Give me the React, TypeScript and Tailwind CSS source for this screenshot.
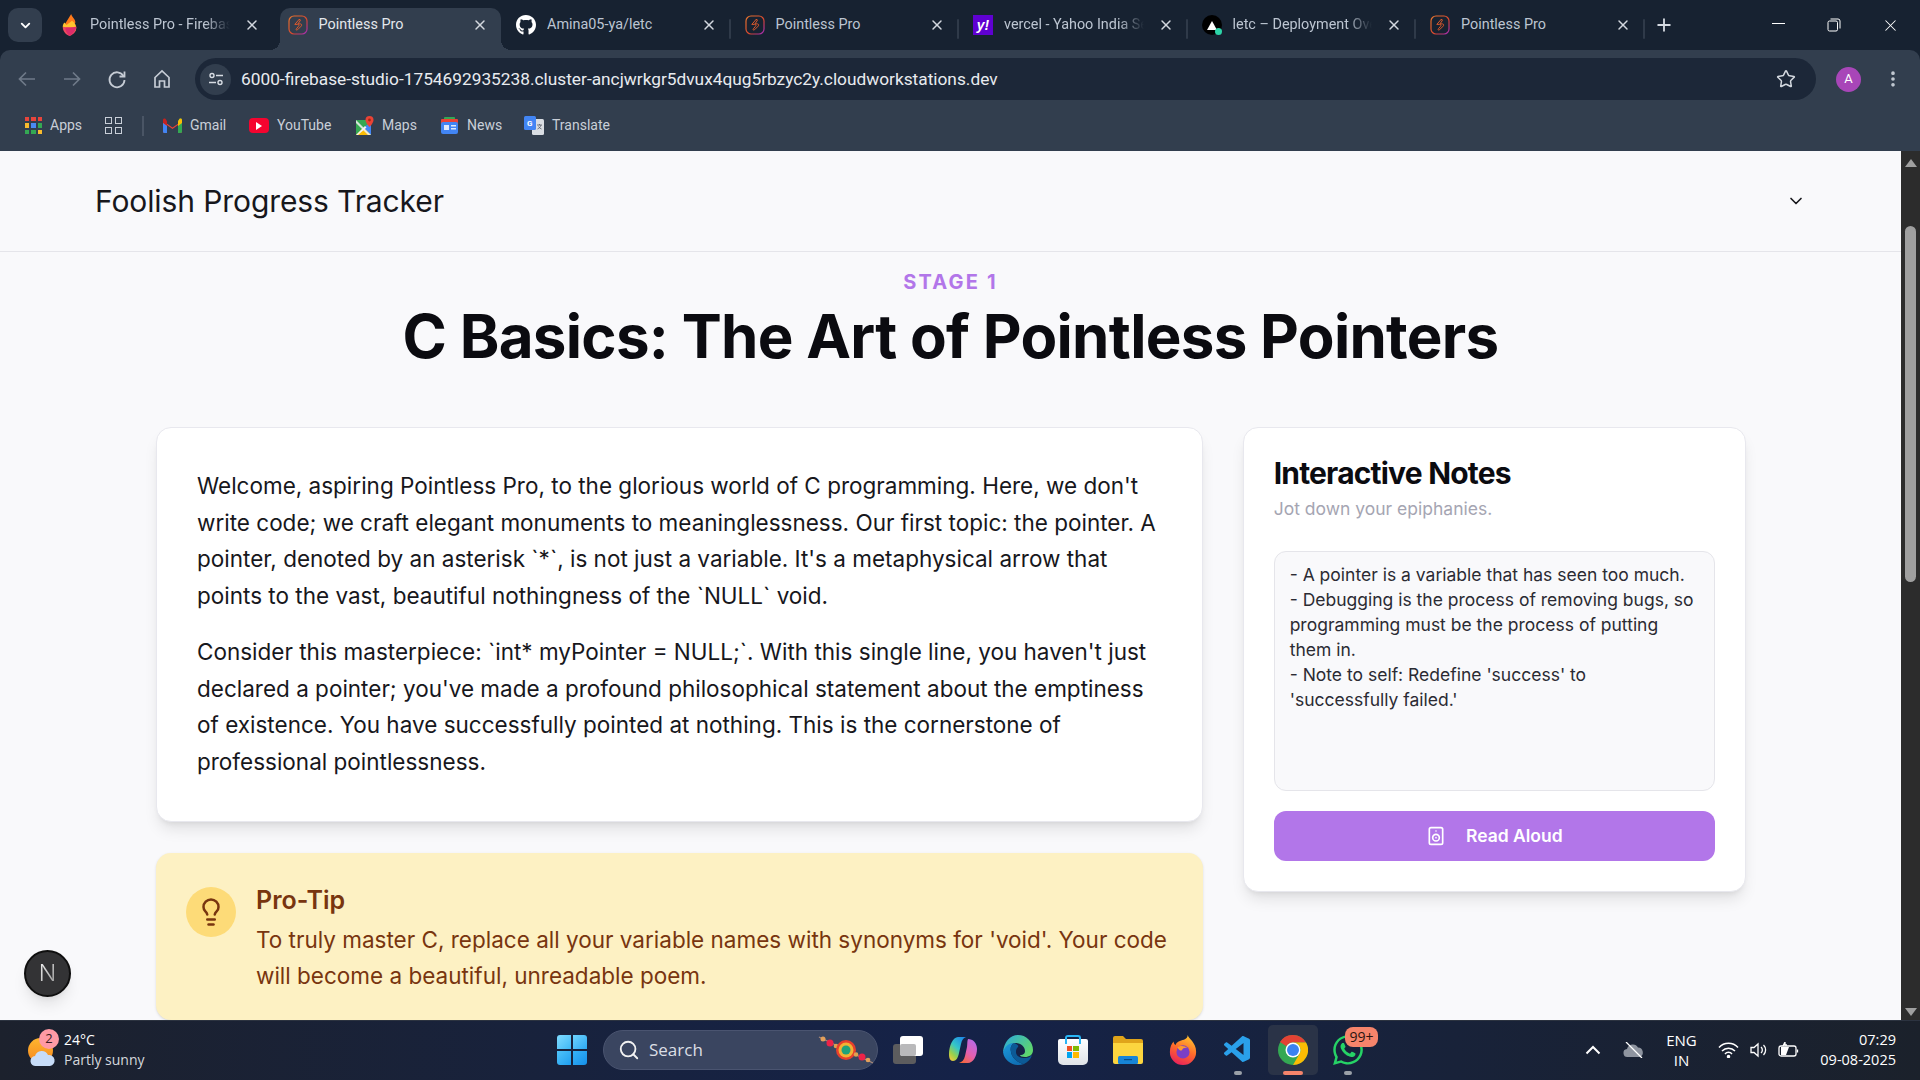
import { ChevronDown, EllipsisVertical, Lightbulb, Plus, Search, Speaker, Star, X } from 'lucide-react'
import { FaGithub, FaWhatsapp } from 'react-icons/fa'
import { VscVscode } from 'react-icons/vsc'
import type { ReactNode } from 'react'

function PointlessIcon() {
    return (
        <svg width="20" height="20" viewBox="0 0 20 20" fill="none">
            <defs>
                <linearGradient id="pp" x1="0" y1="0" x2="1" y2="1">
                    <stop offset="0" stopColor="#e8772e" />
                    <stop offset="0.6" stopColor="#d8452f" />
                    <stop offset="1" stopColor="#a02bc0" />
                </linearGradient>
            </defs>
            <rect x="1" y="1" width="18" height="18" rx="5" stroke="url(#pp)" strokeWidth="1.2" />
            <path d="M11.500 4 6.800 9.400h2.700c1.600 0 1.900 1 .9 2l-2 2.400c-.9 1 .2 1.800 1.200.9l3.600-3.600c.9-1 .5-2.200-.9-2.200H9.900l2.400-3.300c.5-.8-.2-1.200-.8-.6Z" stroke="#dd5a2c" strokeWidth="1" />
        </svg>
    )
}

function FirebaseIcon() {
    return (
        <svg width="15" height="22" viewBox="0 0 16 26">
            <path d="M2 13 10 0c.5 3 5 6 5 10l-6 6Z" fill="#ff7a1a" />
            <path d="M0 15c0-2 1-4 2-5l2.500 3L11 8c3 2 5 5 5 8 0 3-1 5-3 6L8 19Z" fill="#ffc42e" />
            <path d="M0 15c3 1 10 1 16 0 0 6-3 9-8 11-5-2-8-6-8-11Z" fill="#ef4a5f" />
            <path d="M3 16c4 0 8 0 13-1-1 5-4 8-8 11-3-3-5-6-5-10Z" fill="#dd2c6a" />
        </svg>
    )
}

function YahooIcon() {
    return (
        <div className="w-5 h-5 bg-[#5f01d1] flex items-center justify-center text-white text-[14px] font-bold font-[Liberation_Sans,sans-serif] italic">
            y!
        </div>
    )
}

function VercelIcon() {
    return (
        <div className="relative w-5 h-5 rounded-full bg-black flex items-center justify-center">
            <div className="w-0 h-0 border-l-[5px] border-r-[5px] border-b-[9px] border-l-transparent border-r-transparent border-b-white" />
            <div className="absolute right-0 bottom-0 w-[7px] h-[7px] rounded-full bg-[#2dd4a8]" />
        </div>
    )
}

type TabProps = { icon: ReactNode; title: string; active?: boolean; separator?: boolean; fade?: boolean }

function Tab({ icon, title, active, separator, fade }: TabProps) {
    return (
        <div
            className={`relative w-[228.500px] h-[42px] shrink-0 flex items-center pl-[11px] pr-[17px] pb-[8px] ${
                active ? 'text-[#e3e7ec]' : 'text-[#bcc5d1]'
            }`}
        >
            {active && (
                <>
                    <div className="absolute top-0 bottom-0 left-[3px] right-[4px] bg-[#323e4e] rounded-t-[10px]" />
                    <div className="absolute bottom-0 -left-[7px] w-[10px] h-[10px] bg-[radial-gradient(circle_at_0_0,transparent_10px,#323e4e_10px)]" />
                    <div className="absolute bottom-0 right-[-6px] w-[10px] h-[10px] bg-[radial-gradient(circle_at_100%_0,transparent_10px,#323e4e_10px)]" />
                </>
            )}
            <div className="relative w-5 shrink-0 flex items-center justify-center">{icon}</div>
            <div
                className={`relative flex-1 min-w-0 ml-[11px] overflow-hidden whitespace-nowrap text-[14.400px] ${
                    fade ? '[mask-image:linear-gradient(to_right,black_82%,transparent)]' : ''
                }`}
            >
                {title}
            </div>
            <X size={16} strokeWidth={2.2} className="relative ml-[14px] shrink-0 text-[#d3d8df]" />
            {separator && <div className="absolute right-[3px] top-[11px] w-[2px] h-5 bg-[#2f3a49] rounded" />}
        </div>
    )
}

function TabStrip() {
    return (
        <div className="h-[50px] bg-[#172231] flex items-start pt-[8px] pl-2 shrink-0">
            <div className="w-[34px] h-[34px] bg-[#323e4e] rounded-[10px] flex items-center justify-center text-white shrink-0">
                <ChevronDown size={15} strokeWidth={3} />
            </div>
            <div className="flex ml-[6px]">
                <Tab icon={<FirebaseIcon />} title="Pointless Pro - Firebase Studio" fade />
                <Tab icon={<PointlessIcon />} title="Pointless Pro" active />
                <Tab icon={<FaGithub size={22} className="text-white" />} title="Amina05-ya/letc" separator />
                <Tab icon={<PointlessIcon />} title="Pointless Pro" separator />
                <Tab icon={<YahooIcon />} title="vercel - Yahoo India Search" separator fade />
                <Tab icon={<VercelIcon />} title="letc – Deployment Overview" separator fade />
                <Tab icon={<PointlessIcon />} title="Pointless Pro" separator />
            </div>
            <Plus size={20} strokeWidth={2.2} className="ml-[6px] mt-[7px] text-[#d5dae1] shrink-0" />
            <div className="flex-1" />
            <div className="flex items-center text-[#e6e9ee] h-[34px]">
                <div className="w-[55px] flex justify-center">
                    <div className="w-[13px] h-px bg-white -mt-[2px]" />
                </div>
                <div className="w-[55px] flex justify-center">
                    <svg width="14" height="14" viewBox="0 0 14 14" fill="none" stroke="#fff" strokeWidth="1">
                        <rect x="1" y="3" width="9.500" height="10" rx="1.500" />
                        <path d="M3.500 1h7.500a2 2 0 0 1 2 2v7.500" />
                    </svg>
                </div>
                <div className="w-[59px] flex justify-center">
                    <X size={19} strokeWidth={1.3} className="text-white" />
                </div>
            </div>
        </div>
    )
}

function Toolbar() {
    return (
        <div className="h-[58px] bg-[#323e4e] rounded-t-[10px] flex items-start shrink-0 pl-[15px] pr-[17px] pt-[8px]">
            <div className="h-[42px] flex items-center flex-1 min-w-0">
                <svg width="24" height="24" viewBox="0 0 24 24" fill="none" stroke="#6f7a89" strokeWidth="1.700" className="mr-[21px]">
                    <path d="M20 12H5M11 5.500 4.500 12l6.500 6.500" />
                </svg>
                <svg width="24" height="24" viewBox="0 0 24 24" fill="none" stroke="#6f7a89" strokeWidth="1.700" className="mr-[21px]">
                    <path d="M4 12h15M13 5.500l6.500 6.500-6.500 6.500" />
                </svg>
                <svg width="24" height="24" viewBox="0 0 24 24" fill="none" stroke="#c6ccd5" strokeWidth="1.800" className="mr-[21px]">
                    <path d="M18.500 9a7.500 7.500 0 1 0 1 4" />
                    <path d="M19.500 4.500V9.500h-5" />
                </svg>
                <svg width="24" height="24" viewBox="0 0 24 24" fill="none" stroke="#c6ccd5" strokeWidth="1.700">
                    <path d="M5 10.500 12 4l7 6.500V20h-4.500v-6h-5v6H5Z" />
                </svg>
                <div className="ml-[21px] flex-1 h-[42px] rounded-full bg-[#1c2738] flex items-center pl-[5px] pr-[20px]">
                    <div className="w-[31px] h-[31px] rounded-full bg-[#323e4e] flex items-center justify-center shrink-0">
                        <svg width="18" height="18" viewBox="0 0 18 18" fill="none" stroke="#d7dce3" strokeWidth="1.400">
                            <circle cx="5" cy="5.500" r="2" />
                            <path d="M9 5.500h7M2 12.500h7" />
                            <circle cx="13" cy="12.500" r="2" />
                        </svg>
                    </div>
                    <div className="ml-[10px] flex-1 pt-[2px] font-[Roboto,sans-serif] text-[17.300px] text-[#e8ebef] whitespace-nowrap">
                        6000-firebase-studio-1754692935238.cluster-ancjwrkgr5dvux4qug5rbzyc2y.cloudworkstations.dev
                    </div>
                    <Star size={20} strokeWidth={1.800} className="text-[#d3d8df]" />
                </div>
                <div className="ml-[20px] w-[25px] h-[25px] rounded-full bg-[#a846b8] text-white text-[13px] flex items-center justify-center font-[Roboto,sans-serif]">
                    A
                </div>
                <EllipsisVertical size={20} strokeWidth={2.400} className="ml-[22px] text-[#c3cad3]" />
            </div>
        </div>
    )
}

function AppsIcon() {
    const colors = ['#e8453c', '#e8453c', '#e8453c', '#f9bb2d', '#4a8af4', '#34a853', '#34a853', '#34a853', '#f9bb2d']
    return (
        <div className="grid grid-cols-3 gap-[2px] w-[17px]">
            {colors.map((c, i) => (
                <div key={i} className="w-[4.300px] h-[4.300px]" style={{ background: c }} />
            ))}
        </div>
    )
}

function GmailIcon() {
    return (
        <svg width="19" height="15" viewBox="0 0 19 15">
            <path d="M0 3v10.500A1.500 1.500 0 0 0 1.500 15H4V7l5.500 4L15 7v8h2.500a1.500 1.500 0 0 0 1.500-1.500V3L9.500 9.500Z" fill="#ea4335" />
            <path d="M0 1.700V5l4 3V3.200L2.500.8A1.500 1.500 0 0 0 0 1.700Z" fill="#c5221f" />
            <path d="M15 3.200V15h2.500a1.500 1.500 0 0 0 1.500-1.500V1.700a1.500 1.500 0 0 0-2.500-.9Z" fill="#34a853" />
            <path d="M0 5v8.500A1.500 1.500 0 0 0 1.500 15H4V8Z" fill="#4285f4" />
            <path d="M15 3.200V8l4-3V1.700a1.500 1.500 0 0 0-2.500-.9Z" fill="#fbbc04" />
        </svg>
    )
}

function YouTubeIcon() {
    return (
        <div className="w-5 h-[15px] bg-[#f5042f] rounded-[4px] flex items-center justify-center">
            <div className="w-0 h-0 border-t-[4px] border-b-[4px] border-l-[6px] border-t-transparent border-b-transparent border-l-white" />
        </div>
    )
}

function MapsIcon() {
    return (
        <svg width="18" height="19" viewBox="0 0 18 19">
            <path d="M0 4h15v15H0Z" fill="#35a853" />
            <path d="M0 19 7.500 11.500 15 19Z" fill="#fbbc04" />
            <path d="M7.500 11.500 15 6v13Z" fill="#4285f4" />
            <path d="M0 4 15 19h-3L0 7Z" fill="#f2f2f2" opacity=".85" />
            <path d="M0 19 9 10l1.500 1.500L2 19Z" fill="#f2f2f2" />
            <path d="M13.500 0a4 4 0 0 1 4 4c0 3-4 7-4 7s-4-4-4-7a4 4 0 0 1 4-4Z" fill="#ea4335" />
            <circle cx="13.500" cy="4" r="1.400" fill="#a52714" />
        </svg>
    )
}

function NewsIcon() {
    return (
        <svg width="19" height="17" viewBox="0 0 19 17">
            <rect x="4" y="0" width="11" height="6" rx="1" fill="#34a853" />
            <rect x="1" y="2" width="17" height="5" rx="1" fill="#ea4335" />
            <rect x="1" y="5" width="17" height="12" rx="2" fill="#4285f4" />
            <rect x="4" y="8" width="5" height="5" fill="#dfe9fb" />
            <rect x="11" y="8" width="5" height="1.500" fill="#dfe9fb" />
            <rect x="11" y="11" width="5" height="1.500" fill="#dfe9fb" />
        </svg>
    )
}

function TranslateIcon() {
    return (
        <svg width="20" height="19" viewBox="0 0 20 19">
            <rect x="8" y="3" width="12" height="16" rx="1.500" fill="#d9dde3" />
            <rect x="0" y="0" width="12" height="14" rx="1.500" fill="#4285f4" />
            <text x="3" y="10" fontSize="8" fontWeight="700" fill="#fff" fontFamily="Roboto">G</text>
            <path d="M13 9h5M15.500 8v1M17 9c-.5 2-2 3.500-3.500 4M14.500 10.500c.6 1.200 1.800 2 3 2.500" stroke="#555c66" strokeWidth=".8" fill="none" />
        </svg>
    )
}

type BookmarkProps = { icon: ReactNode; label: string; width: string }

function Bookmark({ icon, label, width }: BookmarkProps) {
    return (
        <div className={`flex items-center ${width}`}>
            {icon}
            <span className="ml-[8px] text-[14px] text-[#c9cfd8] whitespace-nowrap">{label}</span>
        </div>
    )
}

function BookmarksBar() {
    return (
        <div className="h-[43px] bg-[#323e4e] flex items-center shrink-0 pl-[25px] pb-[8px] font-[Roboto,sans-serif]">
            <Bookmark icon={<AppsIcon />} label="Apps" width="w-[80px]" />
            <div className="grid grid-cols-2 gap-[3px] w-[17px] mr-[20px]">
                <div className="w-[7px] h-[7px] border-[1.500px] border-[#c9cfd8]" />
                <div className="w-[7px] h-[7px] border-[1.500px] border-[#c9cfd8]" />
                <div className="w-[7px] h-[7px] border-[1.500px] border-[#c9cfd8]" />
                <div className="w-[7px] h-[7px] border-[1.500px] border-[#c9cfd8]" />
            </div>
            <div className="w-[2px] h-5 bg-[#4a5565] mr-[19px]" />
            <Bookmark icon={<GmailIcon />} label="Gmail" width="w-[86px]" />
            <Bookmark icon={<YouTubeIcon />} label="YouTube" width="w-[107px]" />
            <Bookmark icon={<MapsIcon />} label="Maps" width="w-[84px]" />
            <Bookmark icon={<NewsIcon />} label="News" width="w-[84px]" />
            <Bookmark icon={<TranslateIcon />} label="Translate" width="w-[100px]" />
        </div>
    )
}

function Lesson() {
    return (
        <div className="bg-white border border-[#e8e8ee] rounded-[15px] shadow-lg px-[40px] pt-[40px] pb-[40px] text-[22.500px] leading-[36.560px] text-[#17171c]">
            <p>
                Welcome, aspiring Pointless Pro, to the glorious world of C programming. Here, we don't write code; we
                craft elegant monuments to meaninglessness. Our first topic: the pointer. A pointer, denoted by an
                asterisk `*`, is not just a variable. It's a metaphysical arrow that points to the vast, beautiful
                nothingness of the `NULL` void.
            </p>
            <p className="mt-5">
                Consider this masterpiece: `int* myPointer = NULL;`. With this single line, you haven't just declared a
                pointer; you've made a profound philosophical statement about the emptiness of existence. You have
                successfully pointed at nothing. This is the cornerstone of professional pointlessness.
            </p>
        </div>
    )
}

function ProTip() {
    return (
        <div className="mt-[31px] bg-[#fdf1c3] rounded-[15px] shadow-sm pl-[30px] pr-[30px] pt-[34px] pb-[26px] flex">
            <div className="w-[50px] h-[50px] rounded-full bg-[#fddb78] flex items-center justify-center shrink-0">
                <Lightbulb size={30} strokeWidth={2} className="text-[#78350f]" />
            </div>
            <div className="ml-5 -mt-[2px] text-[#78350f]">
                <h3 className="text-[25px] leading-[30px] font-semibold">Pro-Tip</h3>
                <p className="mt-[7px] text-[22.500px] leading-[36px]">
                    To truly master C, replace all your variable names with synonyms for 'void'. Your code will become a
                    beautiful, unreadable poem.
                </p>
            </div>
        </div>
    )
}

const notes = `- A pointer is a variable that has seen too much.
- Debugging is the process of removing bugs, so programming must be the process of putting them in.
- Note to self: Redefine 'success' to 'successfully failed.'`

function NotesCard() {
    return (
        <div className="bg-white border border-[#e8e8ee] rounded-[15px] shadow-lg px-[30px] pt-[27px] pb-[30px] self-start">
            <h2 className="text-[30px] leading-[36px] font-bold text-[#0b0b10] tracking-[-0.800px]">Interactive Notes</h2>
            <p className="mt-[5px] text-[17.500px] leading-[25px] text-[#a5a5b2]">Jot down your epiphanies.</p>
            <textarea
                readOnly
                defaultValue={notes}
                className="block mt-[30px] w-full h-[240px] resize-none bg-[#f9f9fb] border border-[#e5e5ea] rounded-[12px] px-[15px] pt-[10px] pb-[10px] text-[17.500px] leading-[25px] text-[#2b2b33] outline-none overflow-hidden"
            />
            <div className="mt-5 h-[50px] rounded-[12px] bg-[#b276e9] flex items-center justify-center text-white text-[17.500px] font-semibold">
                <Speaker size={20} strokeWidth={2} className="mr-[20px]" />
                Read Aloud
            </div>
        </div>
    )
}

function Page() {
    return (
        <div className="relative flex-1 min-w-0 overflow-hidden bg-[#f9f9fb]">
            <nav className="h-[101px] border-b border-[#e5e5ea] flex items-center justify-between pl-[95px] pr-[95px]">
                <span className="text-[30px] font-normal tracking-[-0.100px] text-[#17171c]">Foolish Progress Tracker</span>
                <ChevronDown size={20} strokeWidth={2} className="text-[#17171c]" />
            </nav>
            <div className="pt-[15px] text-center">
                <div className="text-[20px] leading-[30px] font-bold tracking-[2.200px] text-[#b276e9]">STAGE 1</div>
                <h1 className="mt-[9px] text-[60px] leading-[60px] font-bold tracking-[-0.700px] text-[#0b0b10]">
                    C Basics: The Art of Pointless Pointers
                </h1>
            </div>
            <div className="mt-[61px] ml-[156px] mr-[155px] grid grid-cols-3 gap-[40px]">
                <div className="col-span-2">
                    <Lesson />
                    <ProTip />
                </div>
                <NotesCard />
            </div>
            <div className="absolute left-[24px] bottom-[23px] w-[47px] h-[47px] rounded-full bg-[#333335] border-2 border-[#0f0f0f] shadow-lg flex items-center justify-center text-[23px] font-light">
                <span className="bg-gradient-to-br from-white to-[#8a8a8a] bg-clip-text text-transparent">N</span>
            </div>
        </div>
    )
}

function Scrollbar() {
    return (
        <div className="w-[19px] bg-[#2c2c2c] shrink-0 flex flex-col items-center pt-[8px] pb-[4px]">
            <div className="w-0 h-0 border-l-[6px] border-r-[6px] border-b-[8px] border-l-transparent border-r-transparent border-b-[#a0a0a0]" />
            <div className="mt-[59px] w-[11px] h-[356px] rounded-full bg-[#9f9f9f]" />
            <div className="flex-1" />
            <div className="w-0 h-0 border-l-[6px] border-r-[6px] border-t-[8px] border-l-transparent border-r-transparent border-t-[#a0a0a0]" />
        </div>
    )
}

function WinLogo() {
    return (
        <div className="grid grid-cols-2 gap-[2px] w-[30px] h-[30px] shrink-0">
            <div className="rounded-tl-[3px] bg-gradient-to-br from-[#7fdcff] to-[#3cb8f5]" />
            <div className="rounded-tr-[3px] bg-gradient-to-br from-[#6cd3fd] to-[#2aa9f2]" />
            <div className="rounded-bl-[3px] bg-gradient-to-br from-[#4ec3fa] to-[#1c9ef0]" />
            <div className="rounded-br-[3px] bg-gradient-to-br from-[#36b3f7] to-[#1590ea]" />
        </div>
    )
}

function Rakhi() {
    return (
        <svg width="58" height="30" viewBox="0 0 58 30">
            <path d="M2 2 56 28" stroke="#a98a7a" strokeWidth="1.300" />
            <circle cx="6" cy="4" r="2.500" fill="#e3a05a" />
            <circle cx="13" cy="8" r="3.500" fill="#ee2348" />
            <circle cx="19" cy="11" r="2.300" fill="#e0a050" />
            <circle cx="29" cy="15" r="10" fill="#e8402c" />
            <circle cx="29" cy="15" r="7.500" fill="#f2b233" />
            <circle cx="29" cy="15" r="4.500" fill="#1fa37a" />
            <circle cx="39" cy="19.500" r="2.300" fill="#e0a050" />
            <circle cx="45" cy="22" r="3.500" fill="#ee2348" />
            <circle cx="51" cy="25" r="2.300" fill="#e3a05a" />
        </svg>
    )
}

function TaskViewIcon() {
    return (
        <div className="relative w-[30px] h-[28px]">
            <div className="absolute left-0 bottom-0 w-[23px] h-5 rounded-[3px] bg-[#5c5c5e]" />
            <div className="absolute right-0 top-0 w-[23px] h-5 rounded-[3px] bg-white" />
            <div className="absolute left-[7px] top-[8px] w-4 h-[12px] rounded-[2px] bg-[#b9b9bb]" />
        </div>
    )
}

function CopilotIcon() {
    return (
        <svg width="28" height="26" viewBox="0 0 28 26">
            <defs>
                <linearGradient id="c1" x1="0.8" y1="0" x2="0.1" y2="1">
                    <stop offset="0" stopColor="#1f8ae8" />
                    <stop offset="0.45" stopColor="#35c7c8" />
                    <stop offset="0.75" stopColor="#9ad04a" />
                    <stop offset="1" stopColor="#f7c93c" />
                </linearGradient>
                <linearGradient id="c2" x1="0.8" y1="0" x2="0.2" y2="1">
                    <stop offset="0" stopColor="#b46be8" />
                    <stop offset="0.55" stopColor="#e45fb0" />
                    <stop offset="1" stopColor="#f5673a" />
                </linearGradient>
            </defs>
            <path d="M9 0h8c-3 1-4 3-5 7l-2 9c-1 5-3 8-6 8-3 0-4-3-4-7C0 9 4 0 9 0Z" fill="url(#c1)" />
            <path d="M19 2c5 0 9 4 9 10 0 7-4 14-9 14h-9c3-1 5-3 6-7l2-9c.5-3 0-6 1-8Z" fill="url(#c2)" />
        </svg>
    )
}

function EdgeIcon() {
    return (
        <svg width="30" height="30" viewBox="0 0 30 30">
            <defs>
                <linearGradient id="e1" x1="0" y1="0" x2="0.6" y2="1">
                    <stop offset="0" stopColor="#1d9bdc" />
                    <stop offset="1" stopColor="#0f6fb4" />
                </linearGradient>
                <linearGradient id="e2" x1="0" y1="0" x2="1" y2="0.6">
                    <stop offset="0" stopColor="#2aa8e0" />
                    <stop offset="1" stopColor="#5fd66d" />
                </linearGradient>
            </defs>
            <path d="M15 0a15 15 0 0 1 15 15c0 5-4 7-8 7-3 0-5-1-5-2 4 0 5-2 5-4 0-4-4-8-9-8-5 0-9 3-13 9C1 7 7 0 15 0Z" fill="url(#e2)" />
            <path d="M0 17c2-6 6-9 11-9-3 2-4 5-3 9 1 6 6 10 13 12-2 .7-4 1-6 1A15 15 0 0 1 0 17Z" fill="url(#e1)" />
            <path d="M11 8c-3 2-4 5-3 9 1 6 6 10 13 12 4-2 7-5 8-9-2 2-4 3-7 3-5 0-9-2-9-6 0-2 .5-4 2-5 .5-1 1-2-4-4Z" fill="#0c5a96" />
        </svg>
    )
}

function StoreIcon() {
    return (
        <div className="relative w-[30px] h-[30px] flex items-end">
            <div className="absolute left-[7px] top-0 w-[16px] h-[9px] border-2 border-b-0 border-[#29b6f6] rounded-t-[3px]" />
            <div className="w-[30px] h-[26px] rounded-b-[5px] rounded-t-[2px] bg-gradient-to-b from-white to-[#dfe3e8] flex items-center justify-center">
                <div className="grid grid-cols-2 gap-px w-[12px]">
                    <div className="h-[5.500px] bg-[#f25022]" />
                    <div className="h-[5.500px] bg-[#7fba00]" />
                    <div className="h-[5.500px] bg-[#00a4ef]" />
                    <div className="h-[5.500px] bg-[#ffb900]" />
                </div>
            </div>
        </div>
    )
}

function FolderIcon() {
    return (
        <svg width="30" height="28" viewBox="0 0 30 28">
            <path d="M0 2a2 2 0 0 1 2-2h8l3 3h15a2 2 0 0 1 2 2v4H0Z" fill="#e0a41a" />
            <path d="M0 7h30v19a2 2 0 0 1-2 2H2a2 2 0 0 1-2-2Z" fill="#fcd53f" />
            <rect x="5" y="20" width="20" height="8" rx="1.500" fill="#1785d8" />
            <rect x="11" y="23" width="8" height="1.200" fill="#0b4d86" />
        </svg>
    )
}

function FirefoxIcon() {
    return (
        <svg width="30" height="30" viewBox="0 0 30 32">
            <defs>
                <linearGradient id="f1" x1="0.7" y1="0" x2="0.3" y2="1">
                    <stop offset="0" stopColor="#ffc62e" />
                    <stop offset="0.5" stopColor="#ff6a2b" />
                    <stop offset="1" stopColor="#e8205c" />
                </linearGradient>
            </defs>
            <path d="M20 0c1 4 9 8 9 18a14 14 0 0 1-28 0C1 13 3 9 5 7c0 2 1 3 2 4 1-4 5-5 9-6 3-1 4-3 4-5Z" fill="url(#f1)" />
            <circle cx="15" cy="18" r="7" fill="#7b3fc6" />
            <path d="M9 13c3-2 8-2 11 1-3-1-5 0-6 2-1 1-3 1-5-3Z" fill="#ff9a2e" />
        </svg>
    )
}

function ChromeIcon() {
    return (
        <svg width="30" height="30" viewBox="0 0 30 30">
            <circle cx="15" cy="15" r="15" fill="#34a853" />
            <path d="M15 0a15 15 0 0 1 13 7.500H15a7.500 7.500 0 0 0-6.500 3.750L2 7A15 15 0 0 1 15 0Z" fill="#e34234" />
            <path d="M28 7.500A15 15 0 0 1 15 30l6.500-11.250A7.500 7.500 0 0 0 15 7.500Z" fill="#fbbc04" />
            <circle cx="15" cy="15" r="7.500" fill="#fff" />
            <circle cx="15" cy="15" r="6" fill="#3b82f0" />
        </svg>
    )
}

function TaskIcon({ children, active, dot }: { children: ReactNode; active?: boolean; dot?: boolean }) {
    return (
        <div
            className={`relative w-[50px] h-[50px] mx-[2.500px] flex items-center justify-center rounded-[5px] ${
                active ? 'bg-[#2a3347]' : ''
            }`}
        >
            {children}
            {dot && <div className="absolute bottom-0 left-[21px] w-2 h-[4px] rounded-full bg-[#9aa0a8]" />}
            {active && <div className="absolute bottom-0 left-[15px] w-5 h-[4px] rounded-full bg-[#f5846b]" />}
        </div>
    )
}

function WeatherIcon() {
    return (
        <div className="relative w-[34px] h-[36px] shrink-0">
            <div className="absolute left-0 top-[6px] w-[25px] h-[25px] rounded-full bg-gradient-to-b from-[#fdb62f] to-[#f5871f]" />
            <svg width="26" height="18" viewBox="0 0 26 18" className="absolute left-[2px] top-[17px]">
                <path d="M6 17a5 5 0 0 1-1-10 7 7 0 0 1 13-1 5.500 5.500 0 0 1 2 11Z" fill="#c7dcf8" />
            </svg>
            <div className="absolute left-[11px] -top-[3px] w-5 h-5 rounded-full bg-[#ff9aa5] text-[#3a1c20] text-[13px] flex items-center justify-center">
                2
            </div>
        </div>
    )
}

function Taskbar() {
    return (
        <div className="relative h-[60px] bg-gradient-to-r from-[#1c212d] via-[#152248] to-[#1b212b] border-t border-[#2c3340] shrink-0 flex items-center pb-[2px] font-[Open_Sans,sans-serif] text-white">
            <div className="w-[557px] shrink-0 flex items-center pl-[28px]">
                <WeatherIcon />
                <div className="ml-[2px] text-[14px] leading-[20px]">
                    <div className="font-medium">24°C</div>
                    <div className="text-[#d5d8dd]">Partly sunny</div>
                </div>
            </div>
            <WinLogo />
            <div className="ml-[16px] w-[275px] h-[40px] rounded-full bg-[#3a4560] border border-[#4a5470] flex items-center pl-[14px] pr-[2px] shrink-0">
                <Search size={22} strokeWidth={2} className="text-[#f2f2f2]" />
                <span className="ml-[9px] flex-1 text-[17px] text-[#dcdfe5]">Search</span>
                <Rakhi />
            </div>
            <div className="ml-[2px] flex items-center h-full">
                <TaskIcon><TaskViewIcon /></TaskIcon>
                <TaskIcon><CopilotIcon /></TaskIcon>
                <TaskIcon><EdgeIcon /></TaskIcon>
                <TaskIcon><StoreIcon /></TaskIcon>
                <TaskIcon><FolderIcon /></TaskIcon>
                <TaskIcon><FirefoxIcon /></TaskIcon>
                <TaskIcon dot><VscVscode size={32} className="text-[#2aa0ea]" /></TaskIcon>
                <TaskIcon active><ChromeIcon /></TaskIcon>
                <TaskIcon dot>
                    <FaWhatsapp size={34} className="text-[#26d366]" />
                    <div className="absolute top-[2px] right-[-5px] h-[20px] px-[4px] rounded-[8px] bg-[#f5846b] text-[#2a1510] text-[14px] leading-[20px]">
                        99+
                    </div>
                </TaskIcon>
            </div>
            <div className="flex-1" />
            <div className="flex items-center pr-[24px]">
                <svg width="16" height="10" viewBox="0 0 16 10" fill="none" stroke="#fff" strokeWidth="2">
                    <path d="M1.500 8.500 8 2l6.500 6.500" />
                </svg>
                <svg width="22" height="16" viewBox="0 0 22 16" className="ml-[22px]">
                    <path d="M5 15a4 4 0 0 1-1-8 6 6 0 0 1 11-1.500A5 5 0 0 1 17 15Z" fill="#8f95a0" />
                    <path d="M3 0l16 16" stroke="#fff" strokeWidth="1.300" />
                </svg>
                <div className="ml-[12px] w-[50px] text-center text-[15px] leading-[20px]">
                    ENG
                    <br />
                    IN
                </div>
                <svg width="21" height="16" viewBox="0 0 21 16" fill="none" stroke="#fff" strokeWidth="1.500" className="ml-[11.500px]">
                    <path d="M1 5.500a13 13 0 0 1 19 0M4 9a9 9 0 0 1 13 0M7 12a4.500 4.500 0 0 1 7 0" />
                    <circle cx="10.500" cy="14.500" r="1" fill="#fff" />
                </svg>
                <svg width="20" height="16" viewBox="0 0 20 16" fill="none" stroke="#fff" strokeWidth="1.300" className="ml-[10.500px]">
                    <path d="M1 5.500h3l4-3.500v12l-4-3.500H1Z" />
                    <path d="M11 5a4 4 0 0 1 0 6M13.500 3a7 7 0 0 1 0 10" />
                </svg>
                <svg width="22" height="16" viewBox="0 0 22 16" fill="none" stroke="#fff" strokeWidth="1.300" className="ml-[8.500px]">
                    <rect x="1" y="4" width="17" height="10" rx="2" />
                    <path d="M19.500 7.500v3" />
                    <path d="M3 5h8l-3 8H3Z" fill="#fff" stroke="none" />
                    <path d="M5 4 7 0v3h2" />
                </svg>
                <div className="ml-[16px] w-[80px] text-right text-[14.500px] leading-[20px] whitespace-nowrap">
                    <div>07:29</div>
                    <div>09-08-2025</div>
                </div>
            </div>
        </div>
    )
}

export default function App() {
    return (
        <div className="w-[1920px] h-[1080px] flex flex-col overflow-hidden font-[Inter,sans-serif]">
            <div className="font-[Roboto,sans-serif] bg-[#172231]">
                <TabStrip />
                <Toolbar />
                <BookmarksBar />
            </div>
            <div className="flex-1 min-h-0 flex">
                <Page />
                <Scrollbar />
            </div>
            <Taskbar />
        </div>
    )
}
